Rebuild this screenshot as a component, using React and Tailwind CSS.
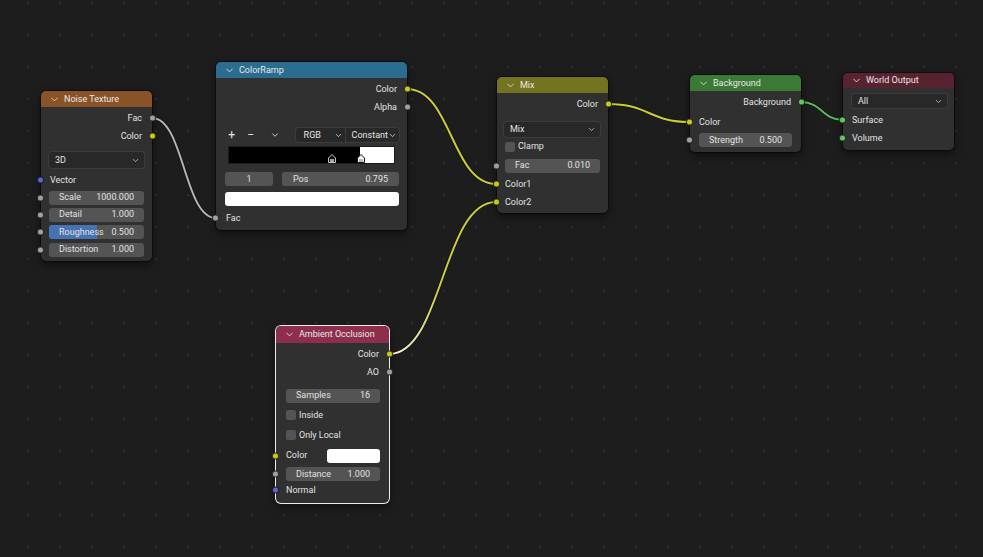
import { ChevronDown } from 'lucide-react';

// socket colours
const GREY = 'bg-[#a1a1a1]';
const YELLOW = 'bg-[#c7c729]';
const GREEN = 'bg-[#63c763]';
const VIOLET = 'bg-[#6363c7]';

function Socket({ side, color }) {
    return (
        <span
            className={`absolute top-1/2 -translate-y-1/2 w-[7px] h-[7px] rounded-full border border-black/70 ${color} ${
                side === 'l' ? 'left-[-4px]' : 'right-[-4px]'
            }`}
        />
    );
}

function Gap({ h }) {
    return <div className={h} />;
}

function Node({ pos, title, head, active, children }) {
    return (
        <div
            className={`absolute ${pos} rounded-[5px] bg-[#303030] shadow-[0_3px_8px_rgba(0,0,0,0.55)] ${
                active ? 'ring-1 ring-[#ededed]' : 'ring-1 ring-black/40'
            }`}
        >
            <div className={`flex items-center gap-[4px] pl-[8px] rounded-t-[5px] text-[#e8e8e8] ${head}`}>
                <ChevronDown size={11} strokeWidth={2} className="text-[#dcdcdc]" />
                <span>{title}</span>
            </div>
            {children}
        </div>
    );
}

function Out({ label, color, pr = 'pr-[10px]' }) {
    return (
        <div className={`relative h-[18px] flex items-center justify-end ${pr}`}>
            <span>{label}</span>
            <Socket side="r" color={color} />
        </div>
    );
}

function In({ label, color, pl = 'pl-[9px]' }) {
    return (
        <div className={`relative h-[18px] flex items-center ${pl}`}>
            <span>{label}</span>
            <Socket side="l" color={color} />
        </div>
    );
}

function Field({ label, value, socket, row = 'h-[17.3px]', pad = 'px-[8px]', fill }) {
    return (
        <div className={`relative flex items-center ${row} ${pad}`}>
            <div className="relative flex-1 h-[14px] rounded-[3px] bg-[#545454] overflow-hidden">
                {fill && <div className="absolute inset-y-0 left-0 w-1/2 bg-[#4772b3]" />}
                <div className="relative h-full flex items-center justify-between px-[10px]">
                    <span>{label}</span>
                    <span>{value}</span>
                </div>
            </div>
            {socket && <Socket side="l" color={socket} />}
        </div>
    );
}

function Select({ label, h = 'h-[16px]', pad = 'px-[8px]' }) {
    return (
        <div className={pad}>
            <div className={`${h} flex items-center justify-between pl-[6px] pr-[4px] rounded-[3px] bg-[#282828] ring-1 ring-[#3c3c3c]`}>
                <span>{label}</span>
                <ChevronDown size={9} strokeWidth={2} className="text-[#cfcfcf]" />
            </div>
        </div>
    );
}

function Check({ label, h = 'h-[14px]', pad = 'pl-[10px]' }) {
    return (
        <div className={`flex items-center gap-[3px] ${h} ${pad}`}>
            <span className="w-[10px] h-[10px] rounded-[2px] bg-[#545454]" />
            <span>{label}</span>
        </div>
    );
}

// Blender style noodle: horizontal handles, half the x distance
function noodle(x1, y1, x2, y2) {
    const d = Math.abs(x2 - x1) * 0.5;
    return `M${x1} ${y1} C${x1 + d} ${y1} ${x2 - d} ${y2} ${x2} ${y2}`;
}

const links = [
    { d: noodle(152, 118, 216, 218), stroke: '#b4b4b4' },
    { d: noodle(407, 89, 496, 184), stroke: '#cccc36' },
    { d: noodle(389, 354, 496, 202), stroke: 'url(#aoLink)' },
    { d: noodle(608, 104, 690, 122), stroke: '#cccc36' },
    { d: noodle(801, 102, 843, 120), stroke: '#5cb85c' },
];

function Links() {
    return (
        <svg className="absolute inset-0" width="983" height="557">
            <defs>
                <linearGradient id="aoLink" gradientUnits="userSpaceOnUse" x1="389" y1="354" x2="496" y2="202">
                    <stop offset="0" stopColor="#f2f2dc" />
                    <stop offset="0.45" stopColor="#cccc36" />
                    <stop offset="1" stopColor="#cccc36" />
                </linearGradient>
            </defs>
            {links.map((l, i) => (
                <path key={'u' + i} d={l.d} fill="none" stroke="#000" strokeOpacity="0.35" strokeWidth="3.6" />
            ))}
            {links.map((l, i) => (
                <path key={i} d={l.d} fill="none" stroke={l.stroke} strokeWidth="2" />
            ))}
        </svg>
    );
}

function Ramp() {
    return (
        <div className="px-[13px]">
            <div className="relative h-[16px] flex ring-1 ring-[#1c1c1c]">
                <div className="w-[79.5%] bg-black" />
                <div className="flex-1 bg-white" />
                <svg className="absolute left-0 top-0" width="165" height="16">
                    <path d="M99.5 15.5 V11 L103 7.5 L106.5 11 V15.5 Z" fill="#111" stroke="#c4c4c4" strokeWidth="1" />
                    <rect x="101" y="12" width="4" height="3" fill="#a0a0a0" />
                    <path d="M128.5 15.5 V11 L132 7.5 L135.5 11 V15.5 Z" fill="#f4f4f4" stroke="#1a1a1a" strokeWidth="1" />
                    <rect x="130" y="12" width="4" height="3" fill="#bcbcbc" />
                </svg>
            </div>
        </div>
    );
}

export default function App() {
    return (
        <div className="relative w-[983px] h-[557px] overflow-hidden bg-[#1d1d1d] bg-[radial-gradient(circle,#2d2d2d_0,#2d2d2d_1px,transparent_1.6px)] bg-[length:32px_32px] bg-[position:12px_19px] font-['Roboto',sans-serif] text-[9px] text-[#e2e2e2] leading-none select-none">
            <Links />

            <Node pos="left-[41px] top-[91px] w-[111px]" title="Noise Texture" head="h-[16px] bg-[#8a5227]">
                <Gap h="h-[2px]" />
                <Out label="Fac" color={GREY} />
                <Out label="Color" color={YELLOW} />
                <Gap h="h-[7px]" />
                <Select label="3D" />
                <Gap h="h-[3px]" />
                <In label="Vector" color={VIOLET} />
                <Field label="Scale" value="1000.000" socket={GREY} />
                <Field label="Detail" value="1.000" socket={GREY} />
                <Field label="Roughness" value="0.500" socket={GREY} fill />
                <Field label="Distortion" value="1.000" socket={GREY} />
                <Gap h="h-[3px]" />
            </Node>

            <Node pos="left-[216px] top-[62px] w-[191px]" title="ColorRamp" head="h-[16px] bg-[#2b6d8f]">
                <Gap h="h-[2px]" />
                <Out label="Color" color={YELLOW} />
                <Out label="Alpha" color={GREY} />
                <Gap h="h-[12px]" />
                <div className="flex items-center h-[14px] pl-[8px] pr-[8px] text-[#e4e4e4]">
                    <span className="w-[16px] text-center text-[12px]">+</span>
                    <span className="w-[16px] ml-[4px] text-center text-[12px]">−</span>
                    <span className="w-[16px] ml-[9px] flex justify-center">
                        <ChevronDown size={10} strokeWidth={2} />
                    </span>
                    <div className="ml-[13px] flex flex-1 h-full">
                        <div className="w-[50px] flex items-center justify-between pl-[8px] pr-[3px] bg-[#282828] ring-1 ring-[#3c3c3c] rounded-l-[3px]">
                            <span>RGB</span>
                            <ChevronDown size={9} strokeWidth={2} />
                        </div>
                        <div className="flex-1 flex items-center justify-between pl-[6px] pr-[2px] bg-[#282828] ring-1 ring-[#3c3c3c] rounded-r-[3px]">
                            <span>Constant</span>
                            <ChevronDown size={9} strokeWidth={2} />
                        </div>
                    </div>
                </div>
                <Gap h="h-[5px]" />
                <Ramp />
                <Gap h="h-[9px]" />
                <div className="flex h-[14px] pl-[9px] pr-[8px] gap-[9px]">
                    <div className="w-[48px] rounded-[3px] bg-[#545454] flex items-center justify-center">1</div>
                    <div className="flex-1 rounded-[3px] bg-[#545454] flex items-center justify-between px-[11px]">
                        <span>Pos</span>
                        <span>0.795</span>
                    </div>
                </div>
                <Gap h="h-[6px]" />
                <div className="pl-[9px] pr-[8px]">
                    <div className="h-[14px] rounded-[3px] bg-white" />
                </div>
                <Gap h="h-[3px]" />
                <In label="Fac" color={GREY} pl="pl-[10px]" />
                <Gap h="h-[3px]" />
            </Node>

            <Node pos="left-[497px] top-[77px] w-[111px]" title="Mix" head="h-[16px] bg-[#74731f]">
                <Gap h="h-[2px]" />
                <Out label="Color" color={YELLOW} />
                <Gap h="h-[9px]" />
                <Select label="Mix" h="h-[15px]" pad="pl-[7px] pr-[8px]" />
                <Gap h="h-[3px]" />
                <Check label="Clamp" h="h-[13px]" pad="pl-[8px]" />
                <Gap h="h-[5px]" />
                <Field label="Fac" value="0.010" socket={GREY} row="h-[15px]" pad="pl-[8px] pr-[8px]" />
                <Gap h="h-[2px]" />
                <In label="Color1" color={YELLOW} pl="pl-[8px]" />
                <In label="Color2" color={YELLOW} pl="pl-[8px]" />
                <Gap h="h-[2px]" />
            </Node>

            <Node pos="left-[690px] top-[75px] w-[111px]" title="Background" head="h-[16px] bg-[#3b7a35]">
                <Gap h="h-[2px]" />
                <Out label="Background" color={GREEN} />
                <Gap h="h-[2px]" />
                <In label="Color" color={YELLOW} />
                <Gap h="h-[2px]" />
                <Field label="Strength" value="0.500" socket={GREY} row="h-[14px]" pad="px-[9px]" />
                <Gap h="h-[5px]" />
            </Node>

            <Node pos="left-[843px] top-[73px] w-[111px]" title="World Output" head="h-[15px] bg-[#592231]">
                <Gap h="h-[6px]" />
                <Select label="All" h="h-[14px]" pad="pl-[9px] pr-[7px]" />
                <Gap h="h-[3px]" />
                <In label="Surface" color={GREEN} />
                <In label="Volume" color={GREEN} />
                <Gap h="h-[3px]" />
            </Node>

            <Node pos="left-[276px] top-[326px] w-[113px]" title="Ambient Occlusion" head="h-[17px] bg-[#8f2e4c]" active>
                <Gap h="h-[2px]" />
                <Out label="Color" color={YELLOW} />
                <Out label="AO" color={GREY} />
                <Gap h="h-[7px]" />
                <Field label="Samples" value="16" row="h-[15px]" pad="pl-[10px] pr-[9px]" />
                <Gap h="h-[5px]" />
                <Check label="Inside" />
                <Gap h="h-[6px]" />
                <Check label="Only Local" />
                <Gap h="h-[6px]" />
                <div className="relative flex items-center h-[15px] pl-[10px] pr-[9px]">
                    <span className="flex-1">Color</span>
                    <span className="w-[53px] h-[14px] rounded-[3px] bg-white" />
                    <Socket side="l" color={YELLOW} />
                </div>
                <Gap h="h-[4px]" />
                <Field label="Distance" value="1.000" socket={GREY} row="h-[14px]" pad="pl-[10px] pr-[9px]" />
                <In label="Normal" color={VIOLET} pl="pl-[10px]" />
                <Gap h="h-[4px]" />
            </Node>
        </div>
    );
}
